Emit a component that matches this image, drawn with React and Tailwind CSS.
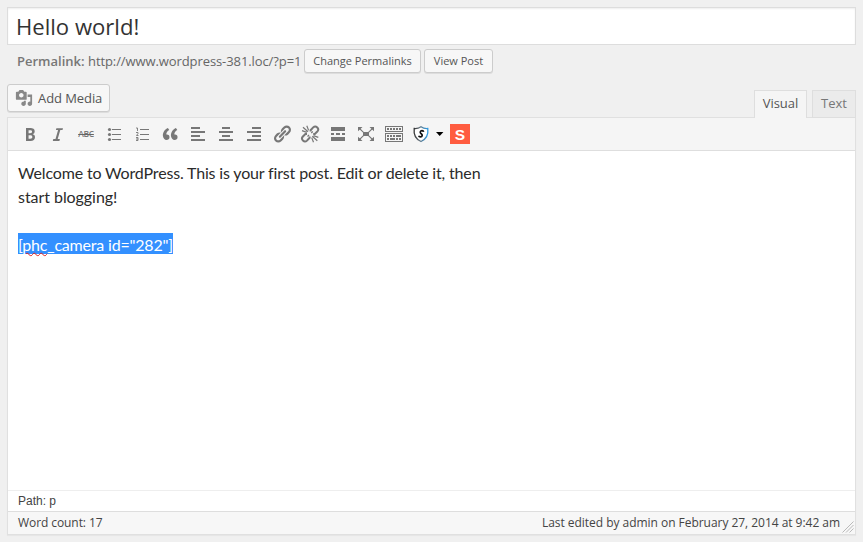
import React from "react";

const LINK =
  "M17.74 2.76c1.68 1.69 1.68 4.41 0 6.1l-1.53 1.52c-1.12 1.12-2.7 1.47-4.14 1.09l2.62-2.61.76-.77.76-.76c.84-.84.84-2.2 0-3.04-.84-.85-2.2-.85-3.04 0l-.77.76-3.38 3.38c-.37-1.44-.02-3.02 1.1-4.14l1.52-1.53c1.69-1.68 4.42-1.68 6.1 0zM8.59 13.43l5.34-5.34c.42-.42.42-1.1 0-1.52-.44-.43-1.13-.39-1.53 0l-5.33 5.34c-.42.42-.42 1.1 0 1.52.44.43 1.13.39 1.52 0zm-.76 2.29l4.14-4.15c.38 1.44.03 3.02-1.09 4.14l-1.52 1.53c-1.69 1.68-4.41 1.68-6.1 0-1.68-1.68-1.68-4.42 0-6.1l1.53-1.52c1.12-1.12 2.7-1.47 4.14-1.1l-4.14 4.15c-.85.84-.85 2.2 0 3.05.84.84 2.2.84 3.04 0z";

function Tool({ label, children }) {
  return (
    <button aria-label={label} className="flex h-5 w-7 shrink-0 items-center justify-center text-[#777]">
      {children}
    </button>
  );
}

function Icon({ children }) {
  return (
    <svg width="20" height="20" viewBox="0 0 20 20" fill="currentColor">
      {children}
    </svg>
  );
}

function Toolbar() {
  return (
    <div className="flex h-[33px] items-center border-b border-[#dedede] bg-[#f5f5f5] pl-2">
      <Tool label="Bold">
        <Icon>
          <path d="M6 4v13h4.54c1.37 0 2.46-.33 3.26-1 .8-.66 1.2-1.58 1.2-2.77 0-.84-.17-1.51-.51-2.01s-.9-.85-1.67-1.03v-.09c.57-.1 1.02-.4 1.36-.9s.51-1.13.51-1.91c0-1.14-.39-1.98-1.17-2.5C12.75 4.26 11.5 4 9.78 4H6zm2.57 5.15V6.26h1.36c.73 0 1.27.11 1.61.32.34.22.51.58.51 1.07 0 .54-.16.92-.47 1.15s-.82.35-1.51.35h-1.5zm0 2.19h1.6c1.44 0 2.16.53 2.16 1.61 0 .6-.17 1.05-.51 1.34s-.86.43-1.57.43H8.57v-3.38z" />
        </Icon>
      </Tool>
      <Tool label="Italic">
        <Icon>
          <path d="M15 4.200l-.5 1.900h-2.200l-2.600 8.900h2.200l-.5 2H4.800l.5-2h2.200l2.600-8.900H7.900l.5-1.900z" />
        </Icon>
      </Tool>
      <Tool label="Strikethrough">
        <span className="font-['Open_Sans',sans-serif] text-[8.500px] leading-none font-semibold tracking-[-0.300px] line-through decoration-[#666] decoration-[1px]">ABC</span>
      </Tool>
      <Tool label="Bulleted list">
        <Icon>
          <circle cx="5.5" cy="5.5" r="1.6" />
          <circle cx="5.5" cy="10.5" r="1.6" />
          <circle cx="5.5" cy="15.5" r="1.6" />
          <path d="M8 5h9v1H8zM8 10h9v1H8zM8 15h9v1H8z" />
        </Icon>
      </Tool>
      <Tool label="Numbered list">
        <Icon>
          <path d="M8 5h9v1H8zM8 10h9v1H8zM8 15h9v1H8z" />
          <path
            d="M4 4h1.500V7M4 8.500h2v1L4.500 11.500H6.500M4 13.500h2v3.000H4M4 15h2"
            fill="none"
            stroke="currentColor"
            strokeWidth=".9"
          />
        </Icon>
      </Tool>
      <Tool label="Blockquote">
        <Icon>
          <path d="M9.49 13.22c0-.74-.2-1.38-.61-1.9-.62-.78-1.83-.88-2.53-.72-.29-1.65 1.11-3.75 2.92-4.65L7.88 4c-2.73 1.3-5.42 4.28-4.96 8.05C3.21 14.43 4.59 16 6.54 16c.85 0 1.56-.25 2.12-.75s.83-1.18.83-2.03zm8.05 0c0-.74-.2-1.38-.61-1.9-.63-.78-1.83-.88-2.53-.72-.29-1.65 1.11-3.75 2.92-4.65L15.93 4c-2.73 1.3-5.41 4.28-4.95 8.05.29 2.38 1.66 3.95 3.61 3.95.85 0 1.56-.25 2.12-.75s.83-1.18.83-2.03z" />
        </Icon>
      </Tool>
      <Tool label="Align left">
        <Icon>
          <path d="M12 5V3H3v2h9zm5 4V7H3v2h14zm-5 4v-2H3v2h9zm5 4v-2H3v2h14z" />
        </Icon>
      </Tool>
      <Tool label="Align center">
        <Icon>
          <path d="M14 5V3H6v2h8zm3 4V7H3v2h14zm-3 4v-2H6v2h8zm3 4v-2H3v2h14z" />
        </Icon>
      </Tool>
      <Tool label="Align right">
        <Icon>
          <path d="M17 5V3H8v2h9zm0 4V7H3v2h14zm0 4v-2H8v2h9zm0 4v-2H3v2h14z" />
        </Icon>
      </Tool>
      <Tool label="Insert link">
        <Icon>
          <path d={LINK} />
        </Icon>
      </Tool>
      <Tool label="Remove link">
        <Icon>
          <path
            d="M10.600 7.600V6.200L13.200 3.400a2.900 2.900 0 0 1 4.100 4.100L14.800 10h-1.600M9.600 12.400v1.400L7 16.600a2.900 2.900 0 0 1-4.100-4.100L5.400 10H7"
            fill="none"
            stroke="currentColor"
            strokeWidth="2"
          />
          <path
            d="M3 3.200l5 4.600M6.800 1.800l1.800 4.600M2 6.600l4.800 1.800M17.300 16.800l-5-4.600M13.500 18.200l-1.800-4.600M18.300 13.400l-4.800-1.800M7.500 12.500L9 11M11.300 9l1.500-1.500"
            fill="none"
            stroke="currentColor"
            strokeWidth="1.2"
          />
        </Icon>
      </Tool>
      <Tool label="Insert more tag">
        <Icon>
          <path d="M17 7V3H3v4h14zM6 11V9H3v2h3zm6 0V9H8v2h4zm5 0V9h-3v2h3zm0 6v-4H3v4h14z" />
        </Icon>
      </Tool>
      <Tool label="Fullscreen">
        <Icon>
          <path d="M7 8h6v4H7zM2 3h4.500L2 7.300zM18 3h-4.500L18 7.300zM2 17h4.500L2 12.700zM18 17h-4.500L18 12.700z" />
          <path d="M3 4l4.500 4.300M17 4l-4.500 4.300M3 16l4.500-4.300M17 16l-4.500-4.300" stroke="currentColor" strokeWidth="1.100" />
        </Icon>
      </Tool>
      <Tool label="Toolbar toggle">
        <Icon>
          <path
            fillRule="evenodd"
            d="M1 2h18v6H1zM2 3v4h16V3zM1 9h18v9H1zM2 10v7h16v-7z"
          />
          <path d="M3 4h2v2H3zM6 4h2v2H6zM9 4h2v2H9zM12 4h2v2h-2zM15 4h2v2h-2zM3 11h2v2H3zM6 11h2v2H6zM9 11h2v2H9zM12 11h5v2h-5zM3 14h2v2H3zM6 14h5v2H6zM12 14h2v2h-2zM15 14h2v2h-2z" />
        </Icon>
      </Tool>
      <button aria-label="Shortcodes" className="flex h-5 w-[38px] shrink-0 items-center pl-[3px]">
        <svg width="20" height="20" viewBox="0 0 20 20">
          <defs>
            <linearGradient id="shield" x1="0" x2="1" y1="0" y2="0">
              <stop offset="0" stopColor="#333" />
              <stop offset=".35" stopColor="#667078" />
              <stop offset="1" stopColor="#2d9ce5" />
            </linearGradient>
          </defs>
          <path
            d="M10 2.800C8 4.200 5.500 4.700 3.200 4.500 2.500 10.500 4.500 15 10 17.500c5.500-2.500 7.500-7 6.800-13C14.500 4.700 12 4.200 10 2.800z"
            fill="#fff"
            stroke="url(#shield)"
            strokeWidth="1.300"
          />
          <path
            d="M12.600 7.800c-.3-1.700-3.200-1.500-3.400.3-.1 1.700 2.300 1.700 2 3.400-.3 1.700-3 1.900-3.500.2"
            fill="none"
            stroke="#111"
            strokeWidth="1.700"
          />
        </svg>
        <svg className="ml-[5px] shrink-0" width="8" height="4" viewBox="0 0 8 4">
          <path d="M0 0h7.400L3.700 4z" />
        </svg>
      </button>
      <button
        aria-label="Shortcode"
        className="ml-1 flex size-5 shrink-0 items-center justify-center bg-[#ff5c40] pt-px font-['Liberation_Sans',sans-serif] text-[15.500px] leading-5 font-bold text-white"
      >
        S
      </button>
    </div>
  );
}

const SMALL_BUTTON =
  "flex h-6 shrink-0 items-center justify-center rounded-[3px] border border-[#ccc] bg-[#f7f7f7] text-[11px] text-[#555] shadow-[0_1px_0_rgba(0,0,0,0.08)]";

export default function App() {
  return (
    <main className="flex h-[542px] w-[863px] flex-col overflow-hidden bg-[#f0f0f0] px-[7px] pt-[7px] font-['Open_Sans',sans-serif] text-[13px] text-[#444]">
      <div className="flex h-[38px] w-[849px] items-center border border-[#ddd] bg-white pt-[2px] pl-2 text-[22.100px] text-[#333] shadow-[inset_0_1px_2px_rgba(0,0,0,0.07)]">
        Hello world!
      </div>

      <div className="mt-1 flex h-6 items-center pl-[10px] text-[#666]">
        <span className="w-[71px] shrink-0 pt-[2px] font-semibold whitespace-nowrap text-[#777]">Permalink:</span>
        <span className="w-[216px] shrink-0 pt-[2px] tracking-[-0.090px] whitespace-nowrap">http://www.wordpress-381.loc/?p=1</span>
        <button className={`${SMALL_BUTTON} w-[117px]`}>Change Permalinks</button>
        <button className={`${SMALL_BUTTON} ml-[3px] w-[69px]`}>View Post</button>
      </div>

      <div className="mt-[11px] flex h-[33px] w-[849px] items-start justify-between">
        <button className="flex h-7 w-[103px] items-center rounded-[3px] border border-[#ccc] bg-[#f7f7f7] pl-[7px] text-[#555] shadow-[0_1px_0_rgba(0,0,0,0.08)]">
          <svg className="mr-[5px] shrink-0" width="18" height="18" viewBox="0 0 20 20" fill="#888">
            <path d="M13 11V4c0-.55-.45-1-1-1h-1.67L9 1H5L3.670 3H2c-.55 0-1 .45-1 1v7c0 .55.45 1 1 1h10c.55 0 1-.45 1-1zM7 4.500c1.380 0 2.500 1.120 2.500 2.500S8.380 9.500 7 9.500 4.500 8.380 4.500 7 5.620 4.500 7 4.500zM14 6h5v10.500c0 1.380-1.120 2.500-2.500 2.500S14 17.880 14 16.500s1.120-2.500 2.500-2.500c.17 0 .34.02.5.05V9h-3V6zm-4 8.050V13h2v3.500c0 1.380-1.120 2.500-2.500 2.500S7 17.880 7 16.500 8.120 14 9.500 14c.17 0 .34.02.5.05z" />
          </svg>
          <span className="pt-[2px] tracking-[-0.080px] whitespace-nowrap">Add Media</span>
        </button>
        <div className="z-10 mt-[6px] flex gap-[5px]">
          <button className="flex h-7 w-[53px] items-center justify-center border border-b-0 border-[#dedede] bg-[#f5f5f5] pb-px text-[#555]">
            Visual
          </button>
          <button className="flex h-7 w-11 items-center justify-center border border-[#dedede] bg-[#ebebeb] text-[#777]">
            Text
          </button>
        </div>
      </div>

      <section className="flex h-[418px] w-[849px] flex-col border border-[#e0e0e0] bg-white shadow-[0_1px_1px_rgba(0,0,0,0.04)]">
        <Toolbar />
        <div className="h-[339px] pt-[10px] pl-[10px] font-['Lato',sans-serif] text-base leading-6 tracking-[-0.160px] text-[#2b2b2b]">
          <p className="w-[474px]">
            Welcome to WordPress. This is your first post. Edit or delete it, then
            <br />
            <span className="tracking-[-0.050px]">start blogging!</span>
          </p>
          <p className="mt-[22px] flex h-6 items-center">
            <span className="h-[21px] bg-[#3390ff] leading-[23px] tracking-[-0.190px] whitespace-nowrap text-white">
              [
              <span className="underline decoration-[#d22] decoration-wavy decoration-[1px] underline-offset-1">phc</span>
              _camera id="282"]
            </span>
          </p>
        </div>
        <div className="flex h-[21px] shrink-0 items-center border-t border-[#eee] pl-[10px] font-['Liberation_Sans',sans-serif] text-xs">
          Path: p
        </div>
        <div className="flex h-[23px] shrink-0 items-center border-t border-[#dedede] bg-[#f7f7f7] pr-px pl-[10px] text-xs">
          <span className="tracking-[-0.080px]">Word count: 17</span>
          <span className="ml-auto tracking-[-0.035px] whitespace-nowrap">Last edited by admin on February 27, 2014 at 9:42 am</span>
          <svg className="mt-[7px] ml-[2px] shrink-0" width="12" height="12" viewBox="0 0 12 12" fill="none" stroke="#aaa" strokeWidth=".8">
            <path d="M.5 11.500l11-11M4 11.500L11.500 4M7.500 11.500l4-4" />
          </svg>
        </div>
      </section>
    </main>
  );
}
